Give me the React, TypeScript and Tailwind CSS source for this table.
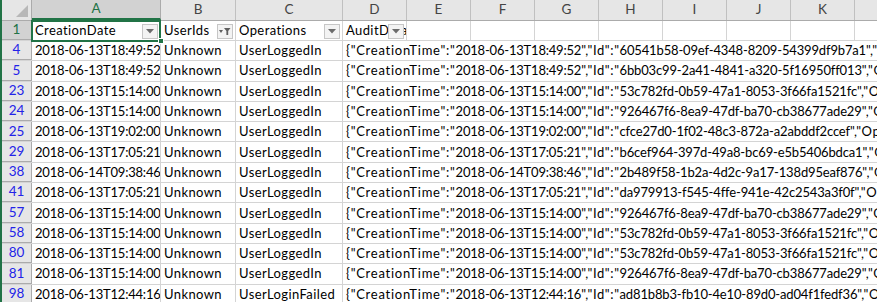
import React from "react";

interface Row {
  num: number;
  date: string;
  user: string;
  op: string;
  id: string;
}

const rows: Row[] = [
  { num: 4, date: "2018-06-13T18:49:52", user: "Unknown", op: "UserLoggedIn", id: "60541b58-09ef-4348-8209-54399df9b7a1" },
  { num: 5, date: "2018-06-13T18:49:52", user: "Unknown", op: "UserLoggedIn", id: "6bb03c99-2a41-4841-a320-5f16950ff013" },
  { num: 23, date: "2018-06-13T15:14:00", user: "Unknown", op: "UserLoggedIn", id: "53c782fd-0b59-47a1-8053-3f66fa1521fc" },
  { num: 24, date: "2018-06-13T15:14:00", user: "Unknown", op: "UserLoggedIn", id: "926467f6-8ea9-47df-ba70-cb38677ade29" },
  { num: 25, date: "2018-06-13T19:02:00", user: "Unknown", op: "UserLoggedIn", id: "cfce27d0-1f02-48c3-872a-a2abddf2ccef" },
  { num: 29, date: "2018-06-13T17:05:21", user: "Unknown", op: "UserLoggedIn", id: "b6cef964-397d-49a8-bc69-e5b5406bdca1" },
  { num: 38, date: "2018-06-14T09:38:46", user: "Unknown", op: "UserLoggedIn", id: "2b489f58-1b2a-4d2c-9a17-138d95eaf876" },
  { num: 41, date: "2018-06-13T17:05:21", user: "Unknown", op: "UserLoggedIn", id: "da979913-f545-4ffe-941e-42c2543a3f0f" },
  { num: 57, date: "2018-06-13T15:14:00", user: "Unknown", op: "UserLoggedIn", id: "926467f6-8ea9-47df-ba70-cb38677ade29" },
  { num: 58, date: "2018-06-13T15:14:00", user: "Unknown", op: "UserLoggedIn", id: "53c782fd-0b59-47a1-8053-3f66fa1521fc" },
  { num: 80, date: "2018-06-13T15:14:00", user: "Unknown", op: "UserLoggedIn", id: "53c782fd-0b59-47a1-8053-3f66fa1521fc" },
  { num: 81, date: "2018-06-13T15:14:00", user: "Unknown", op: "UserLoggedIn", id: "926467f6-8ea9-47df-ba70-cb38677ade29" },
  { num: 98, date: "2018-06-13T12:44:16", user: "Unknown", op: "UserLoginFailed", id: "ad81b8b3-fb10-4e10-89d0-ad04f1fedf36" },
];

const extraCols = ["E", "F", "G", "H", "I", "J", "K"];

const FilterButton = ({ active = false }: { active?: boolean }) => (
  <div className="absolute right-[2px] top-[3px] w-[16px] h-[15px] bg-[#f3f3f3] border border-[#c6c6c6] flex items-center justify-center">
    {active ? (
      <svg width="12" height="9" viewBox="0 0 12 9">
        <polygon points="0,3 4,3 2,6" fill="#5f5f5f" />
        <polygon points="5,1 11.5,1 9.2,4 9.2,8 7.4,8 7.4,4" fill="#5f5f5f" />
      </svg>
    ) : (
      <svg width="8" height="5" viewBox="0 0 8 5">
        <polygon points="0,0 8,0 4,4.5" fill="#6b6b6b" />
      </svg>
    )}
  </div>
);

const App: React.FC = () => {
  return (
    <div
      className="w-[877px] h-[302px] overflow-hidden bg-white border-l-2 border-[#217346] text-[13px] tracking-[0.4px] text-black leading-none"
      style={{ fontFamily: "Lato, 'Liberation Sans', sans-serif" }}
    >
      {/* column headers */}
      <div className="flex h-[21px] bg-[#e6e6e6] border-b border-[#ababab] text-[#444] tracking-normal text-[13.5px]">
        <div className="w-[30px] shrink-0 border-r border-[#ababab] relative">
          <svg className="absolute right-[3px] bottom-[3px]" width="12" height="12" viewBox="0 0 12 12">
            <polygon points="12,0 12,12 0,12" fill="#b8b8b8" />
          </svg>
        </div>
        <div className="w-[129px] shrink-0 flex items-center justify-center bg-[#d2d2d2] text-[#217346] border-r border-[#ababab] border-b-2 border-b-[#217346]">
          A
        </div>
        <div className="w-[75px] shrink-0 flex items-center justify-center border-r border-[#c0c0c0]">B</div>
        <div className="w-[107px] shrink-0 flex items-center justify-center border-r border-[#c0c0c0]">C</div>
        <div className="w-[64px] shrink-0 flex items-center justify-center border-r border-[#c0c0c0]">D</div>
        {extraCols.map((c) => (
          <div key={c} className="w-[64px] shrink-0 flex items-center justify-center border-r border-[#c0c0c0]">
            {c}
          </div>
        ))}
        <div className="flex-1" />
      </div>

      {/* row 1 - headers with filters */}
      <div className="flex h-[20px] border-b border-[#d4d4d4]">
        <div className="w-[30px] shrink-0 bg-[#d2d2d2] text-[#217346] border-r border-[#ababab] flex items-center justify-center border-b border-b-[#ababab] tracking-normal text-[13.5px]">
          1
        </div>
        <div className="w-[129px] shrink-0 relative pl-[3px] flex items-center border-r border-[#d4d4d4]">
          CreationDate
          <FilterButton />
          <div className="absolute -left-[1px] -top-[1px] -right-[1px] -bottom-[2px] border-2 border-[#217346] pointer-events-none" />
          <div className="absolute -right-[4px] -bottom-[4px] w-[6px] h-[6px] bg-[#217346] border border-white" />
        </div>
        <div className="w-[75px] shrink-0 relative pl-[3px] flex items-center border-r border-[#d4d4d4]">
          UserIds
          <FilterButton active />
        </div>
        <div className="w-[107px] shrink-0 relative pl-[3px] flex items-center border-r border-[#d4d4d4]">
          Operations
          <FilterButton />
        </div>
        <div className="w-[64px] shrink-0 relative pl-[3px] flex items-center border-r border-[#d4d4d4] overflow-hidden whitespace-nowrap">
          AuditData
          <FilterButton />
        </div>
        {extraCols.map((c) => (
          <div key={c} className="w-[64px] shrink-0 border-r border-[#d4d4d4]" />
        ))}
        <div className="flex-1" />
      </div>

      {rows.map((r) => (
        <div key={r.num} className="flex h-[20.3px] border-b border-[#d4d4d4]">
          <div className="w-[30px] shrink-0 bg-[#e6e6e6] text-[#2323e8] border-r border-[#ababab] border-b border-b-[#ababab] flex items-center justify-center tracking-normal text-[13.5px]">
            {r.num}
          </div>
          <div className="w-[129px] shrink-0 pl-[3px] flex items-center border-r border-[#d4d4d4] whitespace-nowrap overflow-hidden tracking-[-0.2px]">
            {r.date}
          </div>
          <div className="w-[75px] shrink-0 pl-[3px] flex items-center border-r border-[#d4d4d4] whitespace-nowrap overflow-hidden">
            {r.user}
          </div>
          <div className="w-[107px] shrink-0 pl-[3px] flex items-center border-r border-[#d4d4d4] whitespace-nowrap overflow-hidden">
            {r.op}
          </div>
          <div className="flex-1 pl-[3px] flex items-center whitespace-nowrap overflow-hidden">
            <span className="tracking-[0.75px]">{`{"CreationTime":"`}</span>
            <span className="tracking-[-0.2px]">{r.date}</span>
            <span className="tracking-[0.6px]">{`","Id":"`}</span>
            <span className="tracking-[-0.15px]">{r.id}</span>
            <span className="tracking-[0.6px]">{`","Operation":"${r.op}","OrganizationId":"b1c3e2a0"}`}</span>
          </div>
        </div>
      ))}
    </div>
  );
};

export default App;
